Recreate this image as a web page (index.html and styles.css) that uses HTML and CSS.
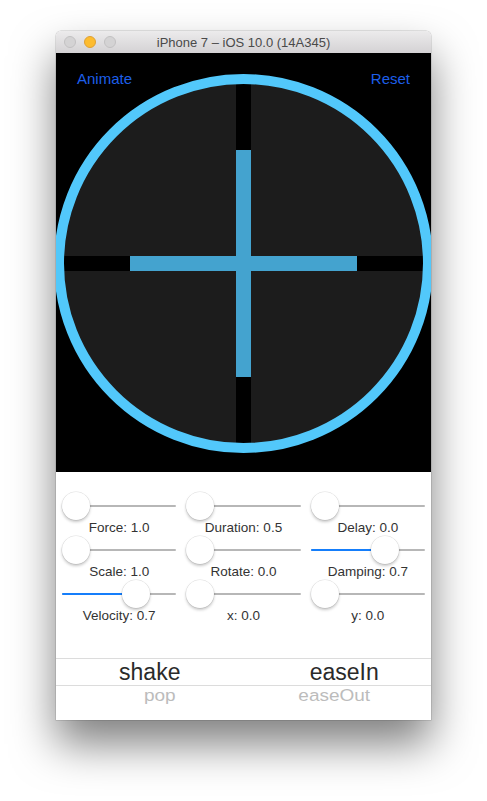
FILE: index.html
```html
<!DOCTYPE html>
<html>
<head>
<meta charset="utf-8">
<link rel="stylesheet" href="styles.css">
</head>
<body>
<div class="window">
  <div class="titlebar">
    <div class="lights">
      <span class="light gray"></span>
      <span class="light yellow"></span>
      <span class="light gray"></span>
    </div>
    <div class="title">iPhone 7 – iOS 10.0 (14A345)</div>
    <div></div>
  </div>
  <div class="screen">
    <div class="stage">
      <button class="btn btn-left">Animate</button>
      <button class="btn btn-right">Reset</button>
      <svg class="dial" width="379" height="379" viewBox="0 0 379 379">
        <circle cx="189.5" cy="189.5" r="184.5" fill="#1c1c1c"/>
        <rect x="182" y="0" width="15" height="379" fill="#000"/>
        <rect x="0" y="182" width="379" height="15" fill="#000"/>
        <rect x="76" y="182" width="227" height="15" fill="#44a3cf"/>
        <rect x="182" y="76" width="15" height="227" fill="#44a3cf"/>
        <circle cx="189.5" cy="189.5" r="184.5" fill="none" stroke="#52c8fb" stroke-width="10"/>
      </svg>
    </div>
    <div class="controls">
      <div class="cell"><div class="slider" style="--v:0"><div class="track"></div><div class="fill"></div><div class="thumb"></div></div><div class="label">Force: 1.0</div></div>
      <div class="cell"><div class="slider" style="--v:0"><div class="track"></div><div class="fill"></div><div class="thumb"></div></div><div class="label">Duration: 0.5</div></div>
      <div class="cell"><div class="slider" style="--v:0"><div class="track"></div><div class="fill"></div><div class="thumb"></div></div><div class="label">Delay: 0.0</div></div>
      <div class="cell"><div class="slider" style="--v:0"><div class="track"></div><div class="fill"></div><div class="thumb"></div></div><div class="label">Scale: 1.0</div></div>
      <div class="cell"><div class="slider" style="--v:0"><div class="track"></div><div class="fill"></div><div class="thumb"></div></div><div class="label">Rotate: 0.0</div></div>
      <div class="cell"><div class="slider" style="--v:0.7"><div class="track"></div><div class="fill"></div><div class="thumb"></div></div><div class="label">Damping: 0.7</div></div>
      <div class="cell"><div class="slider" style="--v:0.7"><div class="track"></div><div class="fill"></div><div class="thumb"></div></div><div class="label">Velocity: 0.7</div></div>
      <div class="cell"><div class="slider" style="--v:0"><div class="track"></div><div class="fill"></div><div class="thumb"></div></div><div class="label">x: 0.0</div></div>
      <div class="cell"><div class="slider" style="--v:0"><div class="track"></div><div class="fill"></div><div class="thumb"></div></div><div class="label">y: 0.0</div></div>
    </div>
    <div class="picker">
      <div class="band">
        <span class="sel sel-left">shake</span>
        <span class="sel sel-right">easeIn</span>
      </div>
      <div class="next">
        <span class="dim dim-left">pop</span>
        <span class="dim dim-right">easeOut</span>
      </div>
    </div>
  </div>
</div>
</body>
</html>
```

FILE: styles.css
```css
* { box-sizing: border-box; }
html, body { margin: 0; padding: 0; background: #fff; }
body {
  font-family: "Liberation Sans", Arial, sans-serif;
  min-height: 801px;
  padding: 31px 0 81px 56px;
}

.window {
  width: 375px;
  border-radius: 5px 5px 0 0;
  box-shadow: 0 24px 44px rgba(0,0,0,0.5), 0 0 0 0.5px rgba(0,0,0,0.2);
  overflow: hidden;
}

.titlebar {
  height: 22px;
  display: grid;
  grid-template-columns: 1fr auto 1fr;
  align-items: center;
  background: linear-gradient(#ecebec, #d4d2d4);
}
.lights { display: flex; gap: 8px; padding-left: 8px; }
.light {
  width: 12px; height: 12px; border-radius: 50%;
  display: block;
}
.light.gray { background: #d4d3d4; border: 0.5px solid #c2c1c2; }
.light.yellow { background: #fdbc2f; border: 0.5px solid #dea034; }
.title {
  font-size: 13px;
  color: #4a4a4a;
  white-space: nowrap;
}

.screen {
  height: 667px;
  background: #fff;
  overflow: hidden;
}

.stage {
  position: relative;
  height: 419px;
  background: #000;
  display: flex;
  justify-content: center;
  align-items: flex-start;
  padding-top: 21px;
  overflow: hidden;
}
.dial { flex-shrink: 0; display: block; }
.btn {
  position: absolute;
  top: 17px;
  background: none;
  border: 0;
  padding: 0;
  font-family: inherit;
  font-size: 15px;
  line-height: 18px;
  color: #1d5fe9;
  z-index: 1;
}
.btn-left { left: 21px; }
.btn-right { right: 21px; }

.controls {
  display: grid;
  grid-template-columns: repeat(3, 1fr);
  column-gap: 10px;
  padding: 20px 6px 0;
}
.cell { display: flex; flex-direction: column; }
.slider {
  position: relative;
  height: 28px;
}
.track {
  position: absolute;
  left: 0; right: 0; top: 13px;
  height: 2px;
  background: #b7b7b7;
  border-radius: 1px;
}
.fill {
  position: absolute;
  left: 0; top: 13px;
  height: 2px;
  width: calc(14px + (100% - 28px) * var(--v));
  background: #157efb;
  border-radius: 1px;
}
.thumb {
  position: absolute;
  top: 0;
  left: calc((100% - 28px) * var(--v));
  width: 28px; height: 28px;
  border-radius: 50%;
  background: #fff;
  box-shadow: 0 2px 3px rgba(0,0,0,0.22), 0 0 0 0.5px rgba(0,0,0,0.12);
}
.label {
  height: 16px;
  line-height: 16px;
  font-size: 13.5px;
  color: #333;
  text-align: center;
  white-space: nowrap;
}

.picker { padding-top: 34px; }
.band {
  display: grid;
  grid-template-columns: 1fr 1fr;
  height: 28px;
  border-top: 1px solid #dcdcdc;
  border-bottom: 1px solid #dcdcdc;
}
.sel {
  text-align: center;
  font-size: 23px;
  line-height: 26px;
  color: #2a2a2a;
}
.sel-right { transform: translateX(7px); }
.next {
  display: grid;
  grid-template-columns: 1fr 1fr;
  height: 20px;
}
.dim {
  text-align: center;
  font-size: 19px;
  line-height: 20px;
  color: #bcbcbc;
}
.dim-left { transform: translateX(10px) scaleY(0.82); }
.dim-right { transform: translateX(-3px) scaleY(0.82); }
```
